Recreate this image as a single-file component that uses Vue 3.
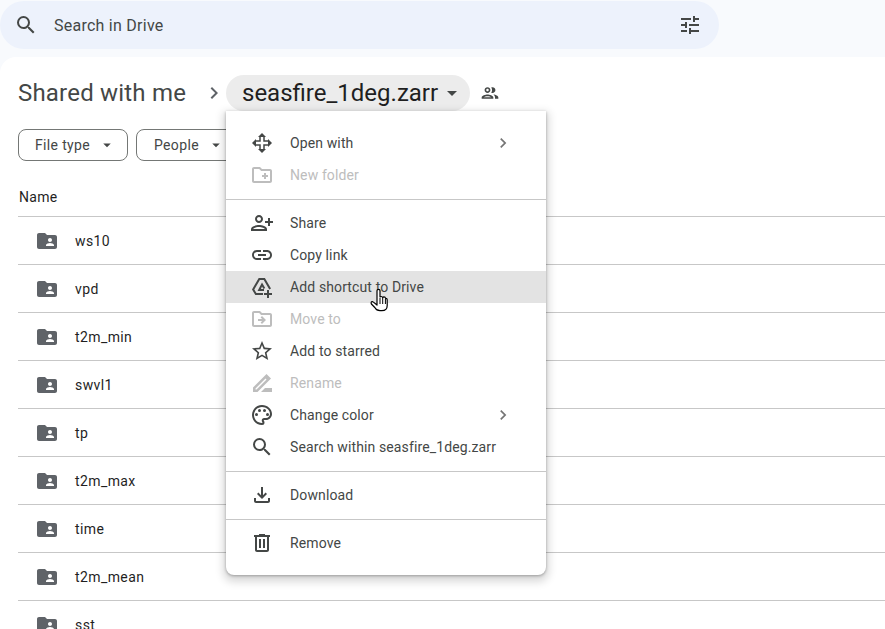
<script setup>
const P = {
  search: 'M15.5 14h-.79l-.28-.27A6.471 6.471 0 0 0 16 9.5 6.5 6.5 0 1 0 9.5 16c1.61 0 3.09-.59 4.23-1.57l.27.28v.79l5 4.99L20.49 19l-4.99-5zm-6 0C7.01 14 5 11.99 5 9.5S7.01 5 9.5 5 14 7.01 14 9.5 11.99 14 9.5 14z',
  tune: 'M3 17v2h6v-2H3zM3 5v2h10V5H3zm10 16v-2h8v-2h-8v-2h-2v6h2zM7 9v2H3v2h4v2h2V9H7zm14 4v-2H11v2h10zm-6-4h2V7h4V5h-4V3h-2v6z',
  chevron: 'M8.59 16.59L13.17 12 8.59 7.41 10 6l6 6-6 6z',
  caret: 'M7 10l5 5 5-5z',
  people: 'M9 13.75c-2.34 0-7 1.17-7 3.5V19h14v-1.75c0-2.33-4.66-3.5-7-3.5zM4.34 17c.84-.58 2.87-1.25 4.66-1.25s3.82.67 4.66 1.25H4.34zM9 12c1.93 0 3.5-1.57 3.5-3.5S10.93 5 9 5 5.5 6.57 5.5 8.5 7.07 12 9 12zm0-5c.83 0 1.5.67 1.5 1.5S9.83 10 9 10s-1.5-.67-1.5-1.5S8.17 7 9 7zm7.04 6.81c1.16.84 1.96 1.96 1.96 3.44V19h4v-1.75c0-2.02-3.5-3.17-5.96-3.44zM15 12c1.93 0 3.5-1.57 3.5-3.5S16.93 5 15 5c-.54 0-1.04.13-1.5.35.63.89 1 1.98 1 3.15s-.37 2.26-1 3.15c.46.22.96.35 1.5.35z',
  folder: 'M20 6h-8l-2-2H4c-1.1 0-1.99.9-1.99 2L2 18c0 1.1.9 2 2 2h16c1.1 0 2-.9 2-2V8c0-1.1-.9-2-2-2zm-5 3c1.1 0 2 .9 2 2s-.9 2-2 2-2-.9-2-2 .9-2 2-2zm4 8h-8v-1c0-1.33 2.67-2 4-2s4 .67 4 2v1z',
  open: 'M12 2l4 4H8zM12 22l-4-4h8zM2 12l4-4v8zM22 12l-4 4V8zM9.25 6h1.5v4.75H6v-1.5h3.25zM13.25 6h1.5v3.25H18v1.5h-4.75zM6 13.25h4.75V18h-1.5v-3.25H6zM13.25 13.25H18v1.5h-3.25V18h-1.5z',
  newFolder: 'M20 6h-8l-2-2H4c-1.11 0-1.99.89-1.99 2L2 18c0 1.11.89 2 2 2h16c1.11 0 2-.89 2-2V8c0-1.11-.89-2-2-2zm0 12H4V6h5.17l2 2H20v10zm-8-4h2v2h2v-2h2v-2h-2v-2h-2v2h-2v2z',
  share: 'M9 12c2.21 0 4-1.79 4-4s-1.79-4-4-4-4 1.79-4 4 1.79 4 4 4zm0-6c1.1 0 2 .9 2 2s-.9 2-2 2-2-.9-2-2 .9-2 2-2zm0 8c-2.67 0-8 1.34-8 4v2h16v-2c0-2.66-5.33-4-8-4zm-6 4c.22-.72 3.31-2 6-2 2.7 0 5.8 1.29 6 2H3zm17-3v-3h3v-2h-3V7h-2v3h-3v2h3v3h2z',
  link: 'M3.9 12c0-1.71 1.39-3.1 3.1-3.1h4V7H7c-2.76 0-5 2.24-5 5s2.24 5 5 5h4v-1.9H7c-1.71 0-3.1-1.39-3.1-3.1zM8 13h8v-2H8v2zm9-6h-4v1.9h4c1.71 0 3.1 1.39 3.1 3.1s-1.39 3.1-3.1 3.1h-4V17h4c2.76 0 5-2.24 5-5s-2.24-5-5-5z',
  shortcut: 'M8.7 3h6.2l6.1 10.4-1.75 1L13.75 5H9.85L4.3 14.4 6.4 18H13v2H5.3L2 14.4zM12 7.5l3.2 5.4-1.7 1L12 11.4 10.9 14H14v2H7.5zM19 15v3h3v2h-3v3h-2v-3h-3v-2h3v-3z',
  move: 'M20 6h-8l-2-2H4c-1.1 0-1.99.9-1.99 2L2 18c0 1.1.9 2 2 2h16c1.1 0 2-.9 2-2V8c0-1.1-.9-2-2-2zm0 12H4V6h5.17l1.41 1.41.59.59H20v10zM12.16 12H8v2h4.16l-1.59 1.59L11.99 17 16 13l-4.01-4-1.41 1.41z',
  star: 'M22 9.24l-7.19-.62L12 2 9.19 8.63 2 9.24l5.46 4.73L5.82 21 12 17.27 18.18 21l-1.63-7.03L22 9.24zM12 15.4l-3.76 2.27 1-4.28-3.32-2.88 4.38-.38L12 6.1l1.71 4.04 4.38.38-3.32 2.88 1 4.28L12 15.4z',
  rename: 'M16.5 3l4.5 4.5L7.5 21H3v-4.5zM15.5 7.5l1 1L6.5 18.5H5.5v-1zM11 21l4-4h7v4z',
  palette: 'M12 22C6.49 22 2 17.51 2 12S6.49 2 12 2s10 4.04 10 9c0 3.31-2.69 6-6 6h-1.77c-.28 0-.5.22-.5.5 0 .12.05.23.13.33.41.47.64 1.06.64 1.67A2.5 2.5 0 0 1 12 22zm0-18c-4.41 0-8 3.59-8 8s3.59 8 8 8c.28 0 .5-.22.5-.5a.54.54 0 0 0-.14-.35c-.41-.46-.63-1.05-.63-1.65a2.5 2.5 0 0 1 2.5-2.5H16c2.21 0 4-1.79 4-4 0-3.86-3.59-7-8-7zM6.5 10a1.5 1.5 0 1 0 0 3 1.5 1.5 0 0 0 0-3zm3-4a1.5 1.5 0 1 0 0 3 1.5 1.5 0 0 0 0-3zm5 0a1.5 1.5 0 1 0 0 3 1.5 1.5 0 0 0 0-3zm3 4a1.5 1.5 0 1 0 0 3 1.5 1.5 0 0 0 0-3z',
  download: 'M18 15v3H6v-3H4v3c0 1.1.9 2 2 2h12c1.1 0 2-.9 2-2v-3h-2zm-1-4l-1.41-1.41L13 12.17V4h-2v8.17L8.41 9.59 7 11l5 5 5-5z',
  trash: 'M15 4V3H9v1H4v2h1v13c0 1.1.9 2 2 2h10c1.1 0 2-.9 2-2V6h1V4h-5zm2 15H7V6h10v13zM9 8h2v9H9zm4 0h2v9h-2z'
}
const files = ['ws10', 'vpd', 't2m_min', 'swvl1', 'tp', 't2m_max', 'time', 't2m_mean', 'sst']
const groups = [
  [
    { icon: 'open', label: 'Open with', arrow: true },
    { icon: 'newFolder', label: 'New folder', disabled: true }
  ],
  [
    { icon: 'share', label: 'Share' },
    { icon: 'link', label: 'Copy link' },
    { icon: 'shortcut', label: 'Add shortcut to Drive', hover: true },
    { icon: 'move', label: 'Move to', disabled: true },
    { icon: 'star', label: 'Add to starred' },
    { icon: 'rename', label: 'Rename', disabled: true },
    { icon: 'palette', label: 'Change color', arrow: true },
    { icon: 'search', label: 'Search within seasfire_1deg.zarr' }
  ],
  [{ icon: 'download', label: 'Download' }],
  [{ icon: 'trash', label: 'Remove' }]
]
</script>

<template>
  <div class="page">
    <header class="topbar">
      <div class="searchbar">
        <svg class="ic search-ic" viewBox="0 0 24 24"><path :d="P.search" /></svg>
        <span class="search-text">Search in Drive</span>
        <svg class="ic tune-ic" viewBox="0 0 24 24"><path :d="P.tune" /></svg>
      </div>
    </header>

    <main class="panel">
      <div class="crumbs">
        <span class="crumb-root">Shared with me</span>
        <svg class="ic crumb-sep" viewBox="0 0 24 24"><path :d="P.chevron" /></svg>
        <button class="crumb-chip">
          <span>seasfire_1deg.zarr</span>
          <svg class="ic chip-caret" viewBox="0 0 24 24"><path :d="P.caret" /></svg>
        </button>
        <svg class="ic crumb-people" viewBox="0 0 24 24"><path :d="P.people" /></svg>
      </div>

      <div class="filters">
        <button class="filter filter-type">File type<svg class="ic" viewBox="0 0 24 24"><path :d="P.caret" /></svg></button>
        <button class="filter filter-people">People<svg class="ic" viewBox="0 0 24 24"><path :d="P.caret" /></svg></button>
      </div>

      <div class="list-head">Name</div>
      <div v-for="f in files" :key="f" class="row">
        <svg class="ic folder" viewBox="0 0 24 24"><path :d="P.folder" /></svg>
        <span class="row-name">{{ f }}</span>
      </div>
    </main>

    <nav class="menu">
      <div v-for="(g, i) in groups" :key="i" class="menu-group">
        <div
          v-for="it in g"
          :key="it.label"
          class="menu-item"
          :class="{ disabled: it.disabled, hover: it.hover }"
        >
          <svg class="ic menu-ic" viewBox="0 0 24 24"><path :d="P[it.icon]" fill-rule="evenodd" /></svg>
          <span class="menu-label">{{ it.label }}</span>
          <svg v-if="it.arrow" class="ic menu-arrow" viewBox="0 0 24 24"><path :d="P.chevron" /></svg>
        </div>
      </div>
    </nav>

    <svg class="cursor" viewBox="0 0 19 25" width="19" height="25">
      <path d="M7 2.8c0-.9.6-1.5 1.5-1.5S10 2 10 2.8V9c.3-.3.7-.5 1.2-.5.7 0 1.3.4 1.5 1.2.2-.5.7-.8 1.3-.8.8 0 1.4.5 1.5 1.4h.4c.8 0 1.3.6 1.3 1.5v5.7c0 3.1-2 5.2-5.4 5.2H10c-2.8 0-4.2-1.3-5.2-3.2L1.4 16c-.4-.7-.5-1.3-.2-1.8.4-.8 1.5-.8 2.2-.1L7 17z" fill="#fff" stroke="#000" stroke-width="1.2" stroke-linejoin="round"/>
      <path d="M10 10v6M12.7 10v6M15.4 11v5" fill="none" stroke="#000" stroke-width="1"/>
    </svg>
  </div>
</template>

<style>
html, body { margin: 0; background: #f8fafd; overflow: hidden; }
</style>

<style scoped>
.page {
  position: relative;
  width: 885px;
  height: 629px;
  overflow: hidden;
  background: #f8fafd;
  font-family: Roboto, "Liberation Sans", sans-serif;
  color: #1f1f1f;
}
.ic { display: block; width: 24px; height: 24px; fill: #444746; flex: none; }
.topbar { height: 57px; box-sizing: border-box; padding-top: 1px; }
.searchbar {
  width: 719px;
  height: 48px;
  display: flex;
  align-items: center;
  background: #edf2fc;
  border-radius: 24px;
  box-sizing: border-box;
  padding: 0 17px 0 14px;
}
.search-text { margin-left: 16px; font-size: 16px; color: #444746; letter-spacing: .25px; flex: 1; }
.panel {
  height: 572px;
  background: #fff;
  border-radius: 16px 0 0 0;
  box-sizing: border-box;
  padding-top: 18px;
}
.crumbs { display: flex; align-items: center; height: 36px; padding-left: 18px; }
.crumb-root { font-size: 24px; letter-spacing: .2px; color: #444746; width: 184px; }
.crumb-sep { width: 24px; height: 24px; fill: #5f6368; }
.crumb-chip {
  height: 36px;
  width: 244px;
  border: 0;
  border-radius: 18px;
  background: #ececec;
  display: flex;
  align-items: center;
  padding: 0 0 0 16px;
  box-sizing: border-box;
  font: 24px Roboto, sans-serif;
  letter-spacing: 0;
  color: #1f1f1f;
}
.chip-caret { margin-left: 2px; }
.crumb-people { width: 20px; height: 20px; margin-left: 10px; }
.filters { display: flex; gap: 8px; padding: 18px 0 0 18px; }
.filter {
  height: 32px;
  border: 1px solid #747775;
  border-radius: 8px;
  background: #fff;
  display: flex;
  align-items: center;
  box-sizing: border-box;
  padding: 0 0 0 16px;
  font: 14px Roboto, sans-serif;
  letter-spacing: .35px;
  color: #444746;
}
.filter .ic { width: 18px; height: 18px; margin-left: 8px; }
.filter-type { width: 110px; }
.filter-people { width: 110px; padding-left: 17px; }
.list-head {
  margin: 0 0 0 18px;
  height: 56px;
  box-sizing: border-box;
  padding: 28px 0 0 1px;
  font-size: 14px;
  line-height: 16px;
  letter-spacing: .3px;
  border-bottom: 1px solid #c7c7c7;
}
.row {
  margin-left: 18px;
  height: 48px;
  box-sizing: border-box;
  border-bottom: 1px solid #c7c7c7;
  display: flex;
  align-items: center;
  padding-left: 17px;
}
.folder { fill: #5f6368; }
.row-name { margin-left: 16px; font-size: 14px; letter-spacing: .4px; }
.menu {
  position: absolute;
  left: 226px;
  top: 111px;
  width: 320px;
  height: 464px;
  background: #fff;
  border-radius: 0 0 8px 8px;
  box-shadow: 0 1px 3px rgba(0,0,0,.3), 0 4px 8px 3px rgba(0,0,0,.15);
  box-sizing: border-box;
  padding: 16px 0;
}
.menu-group { padding: 7px 0 8px; border-bottom: 1px solid #c7c7c7; }
.menu-group:first-child { padding-top: 0; }
.menu-group:last-child { border-bottom: 0; padding-bottom: 0; }
.menu-item { height: 32px; display: flex; align-items: center; padding-left: 24px; font-size: 14px; color: #444746; letter-spacing: .12px; }
.menu-ic { margin-right: 16px; }
.menu-label { flex: 1; }
.menu-arrow { width: 20px; height: 20px; margin-right: 33px; fill: #757575; }
.menu-item.hover { background: #e3e3e3; }
.menu-item.disabled { color: #bdbdbd; }
.menu-item.disabled .ic { fill: #bdbdbd; }
.cursor { position: absolute; left: 370px; top: 288px; }
</style>
